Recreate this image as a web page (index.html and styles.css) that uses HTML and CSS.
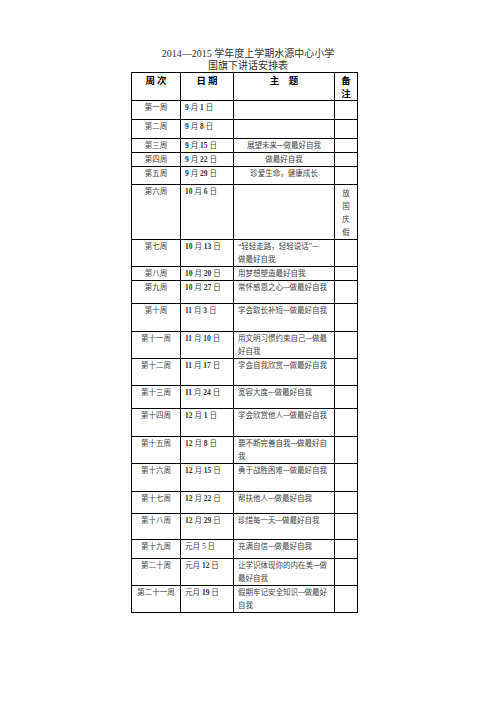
FILE: index.html
```html
<!DOCTYPE html>
<html lang="zh-CN">
<head>
<meta charset="utf-8">
<title>国旗下讲话安排表</title>
<link rel="stylesheet" href="styles.css">
</head>
<body>
<div class="page">
  <div class="title">
    <div class="t1"><span class="num">2014—2015</span> 学年度上学期水源中心小学</div>
    <div class="t2">国旗下讲话安排表</div>
  </div>
  <div class="wrap">
  <table class="plan">
    <colgroup>
      <col class="c1"><col class="c2"><col class="c3"><col class="c4">
    </colgroup>
    <tr class="head h28">
      <th>周 次</th><th>日 期</th><th>主&emsp;题</th><th class="stack"><span>备</span><span>注</span></th>
    </tr>
    <tr class="h19"><td class="wk">第一周</td><td class="dt"><b>9</b> 月 <b>1</b> 日</td><td></td><td></td></tr>
    <tr class="h19"><td class="wk">第二周</td><td class="dt"><b>9</b> 月 <b>8</b> 日</td><td></td><td></td></tr>
    <tr class="h14"><td class="wk">第三周</td><td class="dt"><b>9</b> 月 <b>15</b> 日</td><td class="ctr">展望未来<span class="d">---</span>做最好自我</td><td></td></tr>
    <tr class="h13"><td class="wk">第四周</td><td class="dt"><b>9</b> 月 <b>22</b> 日</td><td class="ctr">做最好自我</td><td></td></tr>
    <tr class="h18"><td class="wk">第五周</td><td class="dt"><b>9</b> 月 <b>29</b> 日</td><td class="ctr">珍爱生命，健康成长</td><td></td></tr>
    <tr class="h54"><td class="wk">第六周</td><td class="dt"><b>10</b> 月 <b>6</b> 日</td><td></td><td class="rm">放<br>国<br>庆<br>假</td></tr>
    <tr class="h26"><td class="wk">第七周</td><td class="dt"><b>10</b> 月 <b>13</b> 日</td><td class="tp">“轻轻走路，轻轻说话”<span class="d">---</span><br>做最好自我</td><td></td></tr>
    <tr class="h13"><td class="wk">第八周</td><td class="dt"><b>10</b> 月 <b>20</b> 日</td><td class="tp">用梦想塑造最好自我</td><td></td></tr>
    <tr class="h23"><td class="wk">第九周</td><td class="dt"><b>10</b> 月 <b>27</b> 日</td><td class="tp">常怀感恩之心<span class="d">---</span>做最好自我</td><td></td></tr>
    <tr class="h28"><td class="wk">第十周</td><td class="dt"><b>11</b> 月 <b>3</b> 日</td><td class="tp">学会取长补短<span class="d">---</span>做最好自我</td><td></td></tr>
    <tr class="h27"><td class="wk">第十一周</td><td class="dt"><b>11</b> 月 <b>10</b> 日</td><td class="tp">用文明习惯约束自己<span class="d">---</span>做最<br>好自我</td><td></td></tr>
    <tr class="h27"><td class="wk">第十二周</td><td class="dt"><b>11</b> 月 <b>17</b> 日</td><td class="tp">学会自我欣赏<span class="d">---</span>做最好自我</td><td></td></tr>
    <tr class="h23"><td class="wk">第十三周</td><td class="dt"><b>11</b> 月 <b>24</b> 日</td><td class="tp">宽容大度<span class="d">---</span>做最好自我</td><td></td></tr>
    <tr class="h28"><td class="wk">第十四周</td><td class="dt"><b>12</b> 月 <b>1</b> 日</td><td class="tp">学会欣赏他人<span class="d">---</span>做最好自我</td><td></td></tr>
    <tr class="h26"><td class="wk">第十五周</td><td class="dt"><b>12</b> 月 <b>8</b> 日</td><td class="tp">要不断完善自我<span class="d">---</span>做最好自<br>我</td><td></td></tr>
    <tr class="h28"><td class="wk">第十六周</td><td class="dt"><b>12</b> 月 <b>15</b> 日</td><td class="tp">勇于战胜困难<span class="d">---</span>做最好自我</td><td></td></tr>
    <tr class="h22"><td class="wk">第十七周</td><td class="dt"><b>12</b> 月 <b>22</b> 日</td><td class="tp">帮扶他人<span class="d">---</span>做最好自我</td><td></td></tr>
    <tr class="h26"><td class="wk">第十八周</td><td class="dt"><b>12</b> 月 <b>29</b> 日</td><td class="tp">珍惜每一天<span class="d">---</span>做最好自我</td><td></td></tr>
    <tr class="h19"><td class="wk">第十九周</td><td class="dt">元月 <span class="n">5</span> 日</td><td class="tp">充满自信<span class="d">---</span>做最好自我</td><td></td></tr>
    <tr class="h27"><td class="wk">第二十周</td><td class="dt">元月 <b>12</b> 日</td><td class="tp">让学识体现你的内在美<span class="d">---</span>做<br>最好自我</td><td></td></tr>
    <tr class="h24"><td class="wk">第二十一周</td><td class="dt">元月 <b>19</b> 日</td><td class="tp">假期牢记安全知识<span class="d">---</span>做最好<br>自我</td><td></td></tr>
  </table>
  </div>
</div>
</body>
</html>
```

FILE: styles.css
```css
html, body {
  margin: 0;
  padding: 0;
  background: #fff;
}

.page {
  width: 496px;
  height: 702px;
  padding-top: 48px;
  box-sizing: border-box;
  font-family: "Liberation Serif", "Noto Sans CJK SC", serif;
  color: #222;
}

.title {
  text-align: center;
  font-size: 10px;
  line-height: 12px;
  color: #333;
}

.title .num {
  font-family: "Liberation Serif", serif;
}

.wrap {
  padding-left: 131px;
}

.plan {
  border-collapse: collapse;
  table-layout: fixed;
  width: 226px;
}

.c1 { width: 49px; }
.c2 { width: 53px; }
.c3 { width: 101px; }
.c4 { width: 23px; }

.plan th,
.plan td {
  border: 1px solid #000;
  padding: 0 4px;
  vertical-align: top;
  font-size: 7.5px;
  line-height: 13px;
  color: #444;
  font-family: "Liberation Serif", "Noto Sans CJK SC", serif;
  font-weight: normal;
  overflow: hidden;
  white-space: nowrap;
}

.plan th {
  font-family: "Noto Sans CJK SC", sans-serif;
  font-weight: bold;
  font-size: 9.5px;
  line-height: 13px;
  color: #000;
  text-align: center;
  padding: 1px 0 0;
}

.plan th.stack span {
  display: block;
  height: 12.5px;
  line-height: 12.5px;
  font-size: 8.6px;
  font-size: 9.5px;
}

.plan td.wk {
  text-align: center;
  padding: 0;
}

.plan td.dt {
  padding-left: 4px;
}

.plan td.dt b {
  font-weight: bold;
  color: #333;
}

.plan td.ctr {
  text-align: center;
  padding: 0;
}

.plan td.rm {
  text-align: center;
  padding: 2px 0 0;
}

.d {
  font-family: "Liberation Serif", serif;
  letter-spacing: -0.3px;
}

.h13 { height: 13px; }
.h14 { height: 14px; }
.h18 { height: 18px; }
.h19 { height: 19px; }
.h22 { height: 22px; }
.h23 { height: 23px; }
.h24 { height: 24px; }
.h26 { height: 26px; }
.h27 { height: 27px; }
.h28 { height: 28px; }
.h54 { height: 54px; }
```
